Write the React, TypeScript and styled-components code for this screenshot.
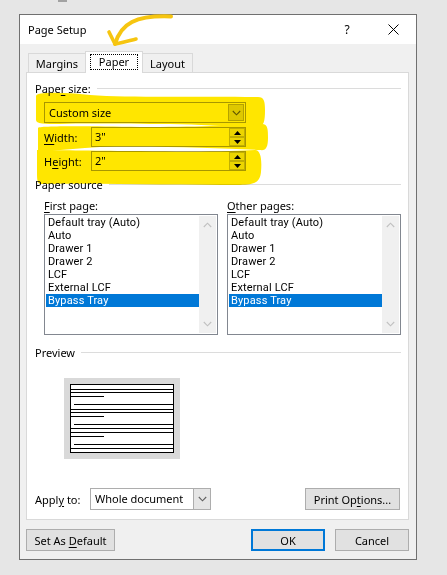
import React from "react";
import styled, { createGlobalStyle, css } from "styled-components";

const GlobalStyle = createGlobalStyle`
  html, body { margin: 0; padding: 0; }
  body {
    background: #e6e6e6;
    font-family: "Noto Sans", "Open Sans", sans-serif;
    font-size: 11px;
    color: #000;
  }
  * { box-sizing: border-box; }
`;

const Screen = styled.div`
  position: relative;
  width: 447px;
  height: 575px;
  overflow: hidden;
`;

const EdgeMark = styled.div`
  margin-left: 58px;
  width: 9px;
  height: 2px;
  background: #a2a2a2;
`;

const Dialog = styled.div`
  margin: 12px 0 0 19px;
  width: 398px;
  height: 546px;
  border: 1px solid #707070;
  background: #f0f0f0;
  display: flex;
  flex-direction: column;
`;

const TitleBar = styled.div`
  height: 29px;
  background: #fff;
  display: flex;
  align-items: center;
`;

const Title = styled.div`
  flex: 1;
  padding-left: 8px;
  line-height: 15px;
`;

const CaptionButton = styled.div`
  width: 46px;
  height: 29px;
  display: flex;
  align-items: center;
  justify-content: center;
  font-size: 12px;
`;

const Body = styled.div`
  flex: 1;
  padding: 7px 7px 8px 6px;
  display: flex;
  flex-direction: column;
`;

const TabStrip = styled.div`
  display: flex;
  align-items: flex-end;
  height: 21px;
  padding-left: 2px;
  position: relative;
  z-index: 1;
`;

const Tab = styled.div<{ $active?: boolean; $w: number }>`
  position: relative;
  width: ${(p) => p.$w}px;
  height: 19px;
  background: #f0f0f0;
  border: 1px solid #d9d9d9;
  border-bottom: none;
  display: flex;
  align-items: center;
  justify-content: center;
  line-height: 15px;
  & + & {
    margin-left: -1px;
  }
  ${(p) =>
    p.$active &&
    css`
      height: 22px;
      margin-bottom: -1px;
      padding-bottom: 1px;
      background: #fff;
      z-index: 2;
    `}
`;

const FocusLabel = styled.span`
  display: inline-block;
  height: 16px;
  line-height: 14px;
  padding: 0 8px;
  border: 1px dotted #000;
`;

const Panel = styled.div`
  height: 448px;
  background: #fff;
  border: 1px solid #d9d9d9;
  padding: 8px 7px 9px 8px;
  display: flex;
  flex-direction: column;
`;

const GroupHeader = styled.div<{ $mt?: number }>`
  display: flex;
  align-items: center;
  gap: 6px;
  height: 15px;
  line-height: 15px;
  margin-top: ${(p) => p.$mt ?? 0}px;
  &::after {
    content: "";
    flex: 1;
    height: 1px;
    background: #dcdcdc;
  }
`;

const Accel = styled.span`
  text-decoration: underline;
  text-underline-offset: 2px;
`;

const Combo = styled.div`
  margin: 6px 0 0 9px;
  width: 202px;
  height: 21px;
  border: 1px solid #a8a8a8;
  background: #fff;
  display: flex;
`;

const BoxText = styled.div`
  flex: 1;
  padding-left: 4px;
  line-height: 19px;
  white-space: nowrap;
`;

const DropButton = styled.div<{ $framed?: boolean }>`
  width: 17px;
  background: #e5e5e5;
  border-left: 1px solid #adadad;
  display: flex;
  align-items: center;
  justify-content: center;
  ${(p) =>
    p.$framed &&
    css`
      margin: 1px;
      width: 16px;
      border: 1px solid #b4b4b4;
      background: #dedede;
    `}
`;

const FieldRow = styled.div`
  display: flex;
  align-items: center;
  height: 20px;
  margin: 4px 0 0 9px;
`;

const FieldLabel = styled.div`
  width: 47px;
  line-height: 15px;
`;

const SpinInput = styled.div`
  width: 155px;
  height: 20px;
  border: 1px solid #a8a8a8;
  background: #fff;
  display: flex;
`;

const SpinText = styled.div`
  flex: 1;
  padding-left: 3px;
  line-height: 18px;
`;

const Spinner = styled.div`
  width: 16px;
  display: flex;
  flex-direction: column;
`;

const SpinHalf = styled.div`
  flex: 1;
  border: 1px solid #c2c2c2;
  background: #ececec;
  display: flex;
  align-items: center;
  justify-content: center;
`;

const ListsRow = styled.div`
  display: grid;
  grid-template-columns: 174px 174px;
  column-gap: 9px;
  margin: 6px 0 0 9px;
`;

const ListCol = styled.div`
  display: flex;
  flex-direction: column;
`;

const ListLabel = styled.div`
  height: 15px;
  line-height: 15px;
`;

const ListBox = styled.div`
  margin-top: 1px;
  height: 121px;
  border: 1px solid #828790;
  padding: 1px;
  background: #fff;
  display: flex;
`;

const Items = styled.div`
  flex: 1;
`;

const Item = styled.div<{ $selected?: boolean }>`
  height: 13px;
  line-height: 13px;
  padding-left: 2px;
  white-space: nowrap;
  font-family: Roboto, "Noto Sans", sans-serif;
  font-size: 11px;
  letter-spacing: 0.15px;
  background: ${(p) => (p.$selected ? "#0078d7" : "transparent")};
  color: ${(p) => (p.$selected ? "#fff" : "#000")};
`;

const ScrollTrack = styled.div`
  width: 17px;
  background: #f0f0f0;
  display: flex;
  flex-direction: column;
  justify-content: space-between;
  align-items: center;
  padding: 6px 0 6px;
`;

const Thumb = styled.div`
  margin: 18px 0 0 29px;
  width: 116px;
  height: 81px;
  padding: 6px;
  background: #d9d9d9;
`;

const ApplyRow = styled.div`
  display: flex;
  align-items: center;
  height: 22px;
  margin-top: 29px;
`;

const ApplyLabel = styled.div`
  width: 55px;
  line-height: 15px;
`;

const Select = styled.div`
  width: 121px;
  height: 22px;
  border: 1px solid #adadad;
  background: #fff;
  display: flex;
`;

const Button = styled.button<{ $w: number; $primary?: boolean }>`
  width: ${(p) => p.$w}px;
  height: 22px;
  padding: 0;
  border: 1px solid #adadad;
  background: #e1e1e1;
  color: #000;
  font-family: "Noto Sans", "Open Sans", sans-serif;
  font-size: 11px;
  line-height: 15px;
  ${(p) =>
    p.$primary &&
    css`
      border: 2px solid #0078d7;
    `}
`;

const PrintButton = styled(Button)`
  margin-left: auto;
  margin-right: 1px;
`;

const Footer = styled.div`
  display: flex;
  gap: 10px;
  margin-top: 9px;
`;

const Spacer = styled.div`
  flex: 1;
`;

const Highlighter = styled.svg`
  position: absolute;
  left: 0;
  top: 0;
  width: 447px;
  height: 575px;
  pointer-events: none;
  mix-blend-mode: multiply;
`;

const Scribble = styled.svg`
  position: absolute;
  left: 0;
  top: 0;
  width: 447px;
  height: 575px;
  pointer-events: none;
`;

const Chevron = ({ up, color = "#606060" }: { up?: boolean; color?: string }) => (
  <svg width="9" height="6" viewBox="0 0 9 6">
    <path
      d={up ? "M0.8 5 L4.5 1.2 L8.2 5" : "M0.8 1 L4.5 4.8 L8.2 1"}
      fill="none"
      stroke={color}
      strokeWidth="1.1"
    />
  </svg>
);

const Triangle = ({ up }: { up?: boolean }) => (
  <svg width="7" height="4" viewBox="0 0 7 4">
    <path d={up ? "M0 4 L3.5 0 L7 4 Z" : "M0 0 L3.5 4 L7 0 Z"} fill="#000" />
  </svg>
);

const CloseGlyph = () => (
  <svg width="11" height="11" viewBox="0 0 11 11">
    <path d="M0.5 0.5 L10.5 10.5 M10.5 0.5 L0.5 10.5" stroke="#000" strokeWidth="1" />
  </svg>
);

const PagePreview = () => {
  const full = [5, 8, 25, 28, 44, 48, 64];
  const short = [12, 32, 52];
  const indented = [20, 40, 60];
  return (
    <svg width="104" height="69" viewBox="0 0 104 69" shapeRendering="crispEdges">
      <rect x="0.5" y="0.5" width="103" height="68" fill="#fff" stroke="#000" strokeWidth="1.4" />
      {full.map((y) => (
        <line key={`f${y}`} x1="0" x2="104" y1={y + 0.5} y2={y + 0.5} stroke="#000" strokeWidth="1.2" />
      ))}
      {short.map((y) => (
        <line key={`s${y}`} x1="0" x2="34" y1={y + 0.5} y2={y + 0.5} stroke="#000" strokeWidth="1.2" />
      ))}
      {indented.map((y) => (
        <line key={`i${y}`} x1="4" x2="104" y1={y + 0.5} y2={y + 0.5} stroke="#000" strokeWidth="1.2" />
      ))}
    </svg>
  );
};

const trays = [
  "Default tray (Auto)",
  "Auto",
  "Drawer 1",
  "Drawer 2",
  "LCF",
  "External LCF",
  "Bypass Tray",
];

const TrayList = ({ selected }: { selected: string }) => (
  <ListBox>
    <Items>
      {trays.map((t) => (
        <Item key={t} $selected={t === selected}>
          {t}
        </Item>
      ))}
    </Items>
    <ScrollTrack>
      <Chevron up color="#c0c0c0" />
      <Chevron color="#c0c0c0" />
    </ScrollTrack>
  </ListBox>
);

const SpinField = ({ label, value }: { label: React.ReactNode; value: string }) => (
  <FieldRow>
    <FieldLabel>{label}</FieldLabel>
    <SpinInput>
      <SpinText>{value}</SpinText>
      <Spinner>
        <SpinHalf>
          <Triangle up />
        </SpinHalf>
        <SpinHalf>
          <Triangle />
        </SpinHalf>
      </Spinner>
    </SpinInput>
  </FieldRow>
);

export default function App() {
  return (
    <Screen>
      <GlobalStyle />
      <EdgeMark />
      <Dialog>
        <TitleBar>
          <Title>Page Setup</Title>
          <CaptionButton>?</CaptionButton>
          <CaptionButton>
            <CloseGlyph />
          </CaptionButton>
        </TitleBar>
        <Body>
          <TabStrip>
            <Tab $w={58}>Margins</Tab>
            <Tab $w={58} $active>
              <FocusLabel>Paper</FocusLabel>
            </Tab>
            <Tab $w={51}>Layout</Tab>
          </TabStrip>
          <Panel>
            <GroupHeader>
              <span>
                Pape<Accel>r</Accel> size:
              </span>
            </GroupHeader>
            <Combo>
              <BoxText>Custom size</BoxText>
              <DropButton $framed>
                <Chevron />
              </DropButton>
            </Combo>
            <SpinField
              label={
                <>
                  <Accel>W</Accel>idth:
                </>
              }
              value={'3"'}
            />
            <SpinField
              label={
                <>
                  H<Accel>e</Accel>ight:
                </>
              }
              value={'2"'}
            />

            <GroupHeader $mt={6}>
              <span>Paper source</span>
            </GroupHeader>
            <ListsRow>
              <ListCol>
                <ListLabel>
                  <Accel>F</Accel>irst page:
                </ListLabel>
                <TrayList selected="Bypass Tray" />
              </ListCol>
              <ListCol>
                <ListLabel>
                  <Accel>O</Accel>ther pages:
                </ListLabel>
                <TrayList selected="Bypass Tray" />
              </ListCol>
            </ListsRow>

            <GroupHeader $mt={10}>
              <span>Preview</span>
            </GroupHeader>
            <Thumb>
              <PagePreview />
            </Thumb>

            <ApplyRow>
              <ApplyLabel>
                Appl<Accel>y</Accel> to:
              </ApplyLabel>
              <Select>
                <BoxText>Whole document</BoxText>
                <DropButton>
                  <Chevron />
                </DropButton>
              </Select>
              <PrintButton $w={95}>
                Print Op<Accel>t</Accel>ions...
              </PrintButton>
            </ApplyRow>
          </Panel>
          <Footer>
            <Button $w={89}>
              Set As <Accel>D</Accel>efault
            </Button>
            <Spacer />
            <Button $w={74} $primary>
              OK
            </Button>
            <Button $w={74}>Cancel</Button>
          </Footer>
        </Body>
      </Dialog>

      <Highlighter viewBox="0 0 447 575">
        <g fill="#ffe600">
          <path d="M36,96 C36,92 60,92 90,95 C130,98 200,96 258,97 C264,97 265,101 265,110 C265,121 264,127 257,127 C222,127 200,124 170,124 C130,124 90,123 60,124 C44,124 36,124 36,120 Z" />
          <path d="M38,128 C38,126 80,126 140,127 C200,127 240,125 262,124 C268,124 268,130 268,138 C268,147 266,151 260,150 C220,148 160,146 100,147 C80,148 60,150 38,152 Z" />
          <path d="M37,150 C60,150 100,151 140,151 C200,152 238,151 255,150 C261,150 262,160 261,172 C260,182 255,185 240,185 C180,185 100,183 41,184 C37,184 37,180 37,170 Z" />
        </g>
      </Highlighter>

      <Scribble viewBox="0 0 447 575">
        <g fill="none" stroke="#f6c510" strokeLinecap="round" strokeLinejoin="round">
          <path d="M171,16.5 C158,16 142,17 132,22 C124,26 118,34 115,44" strokeWidth="4" />
          <path d="M109,32 C111,36 113,40 115,44 C121,43 128,41 136,39" strokeWidth="3.6" />
        </g>
      </Scribble>
    </Screen>
  );
}
